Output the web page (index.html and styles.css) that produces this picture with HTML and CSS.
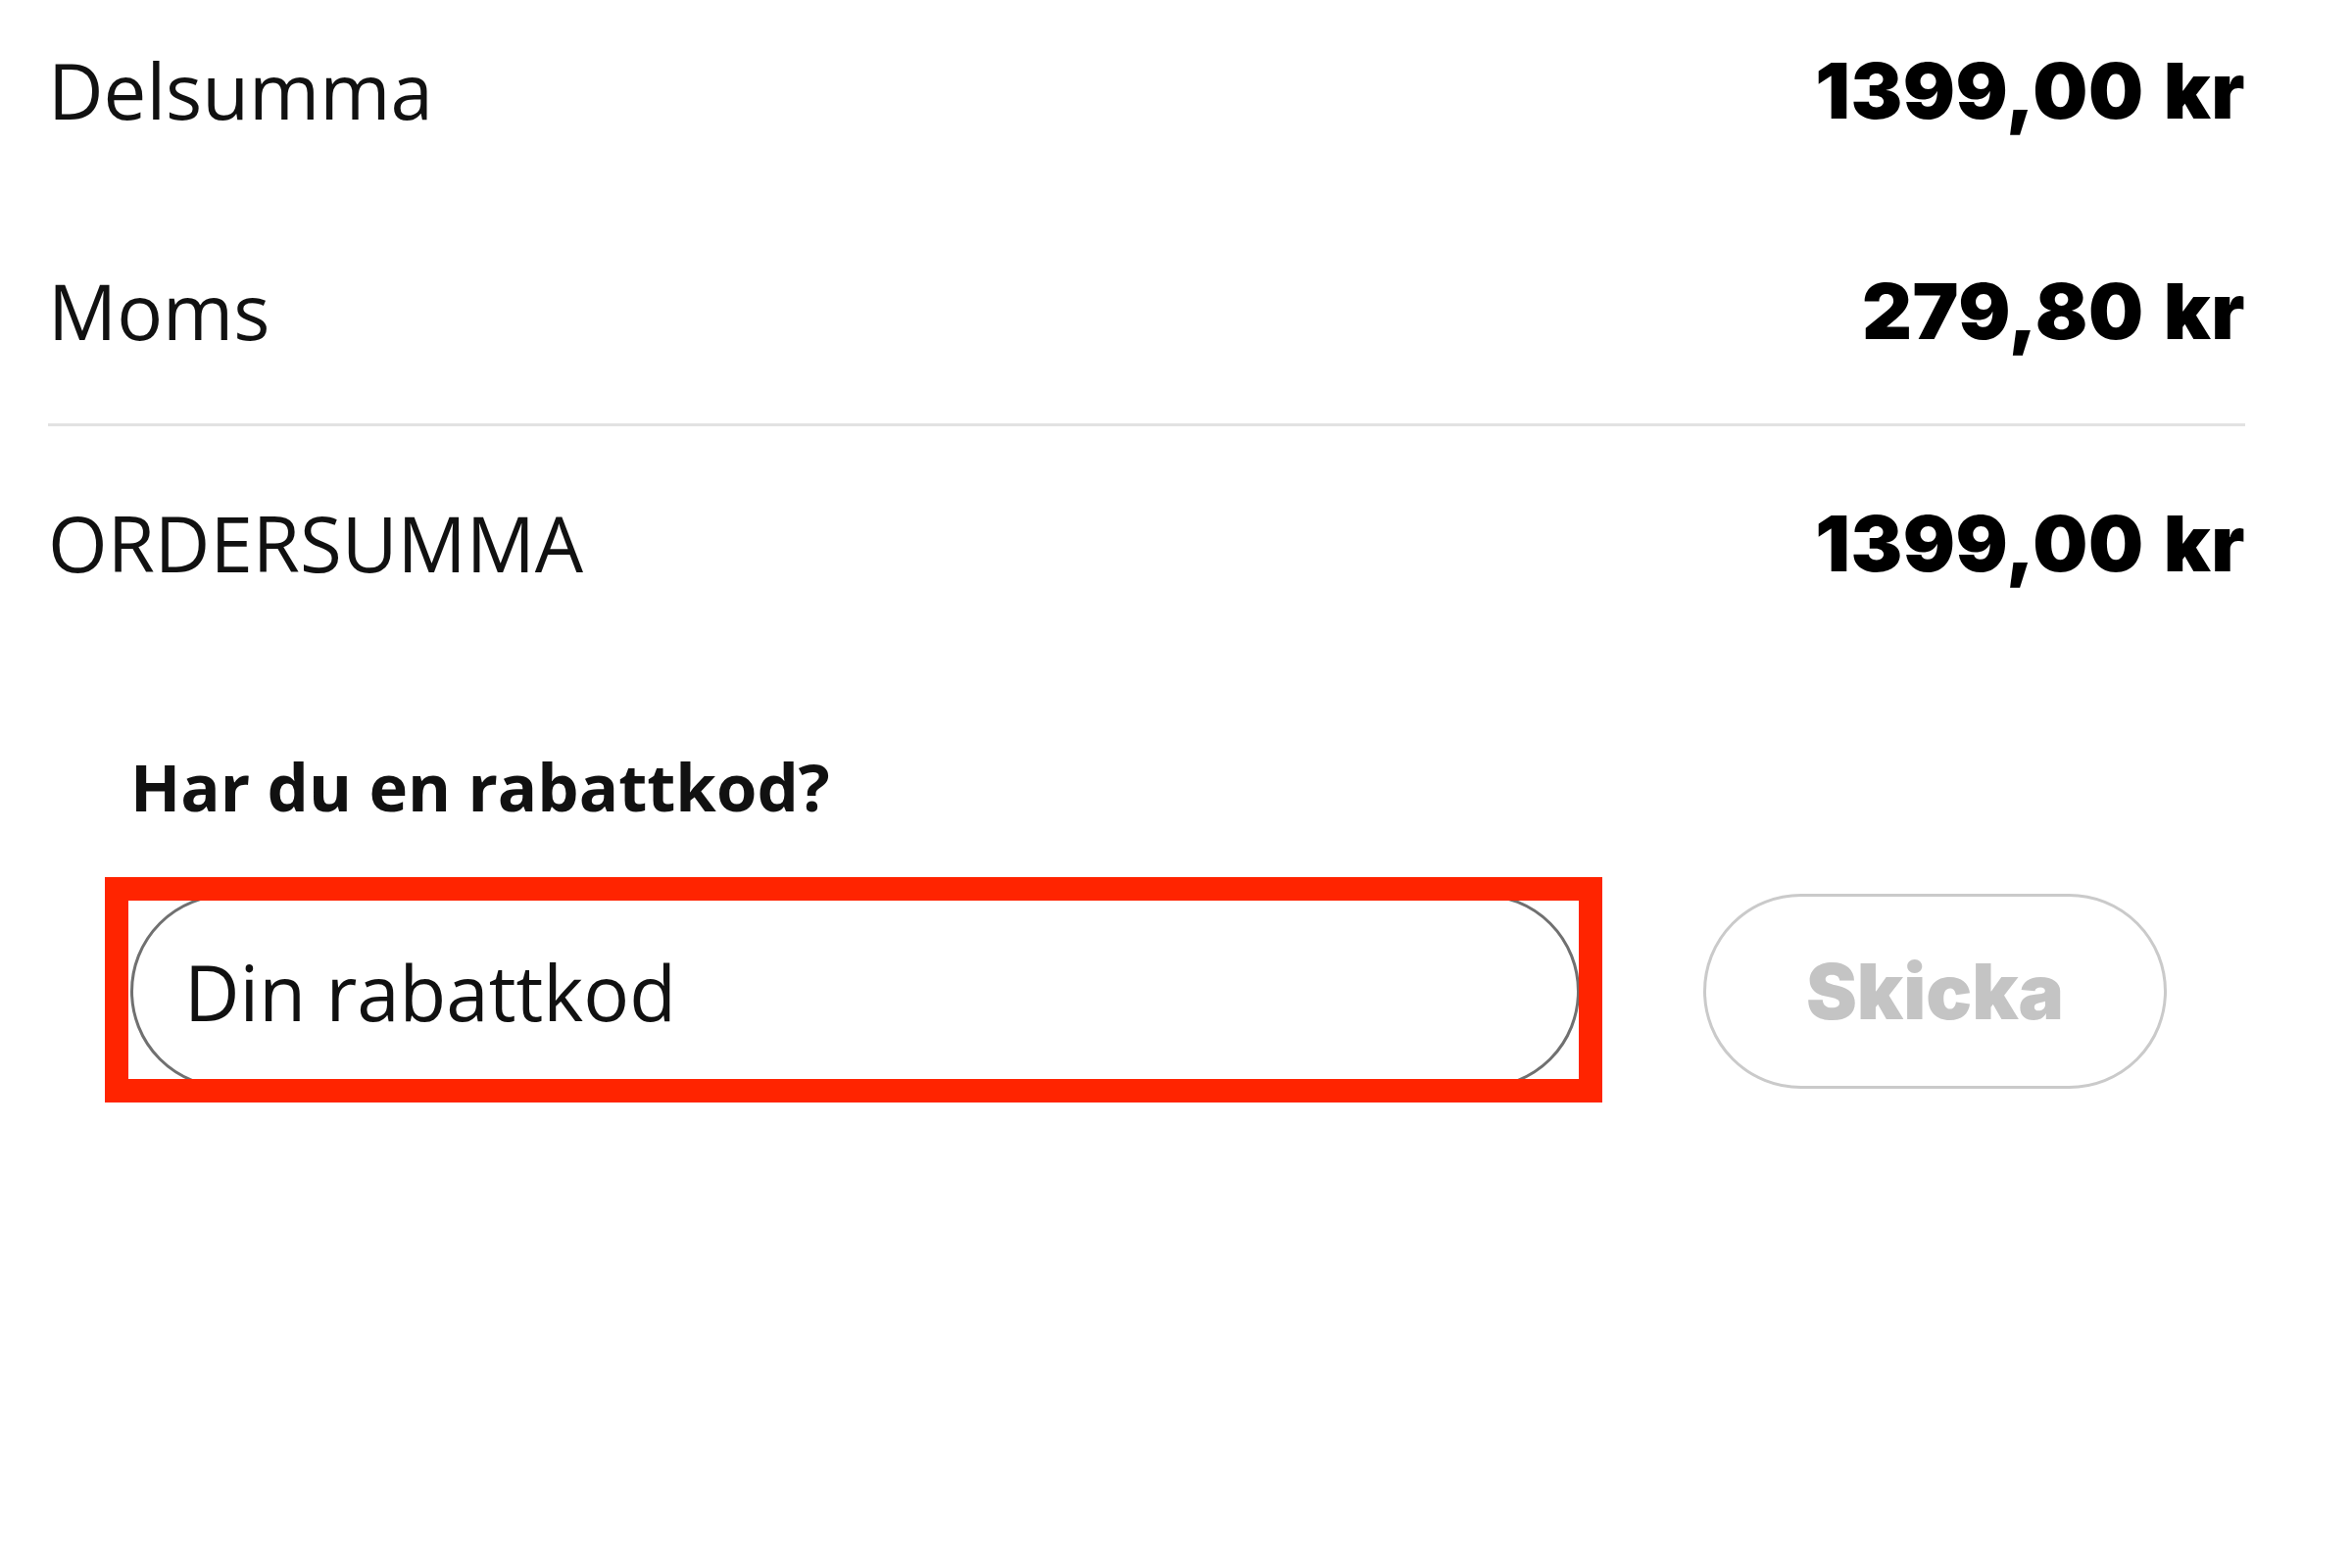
FILE: index.html
```html
<!DOCTYPE html>
<html lang="sv">
<head>
    <meta charset="UTF-8">
    <meta name="viewport" content="width=device-width, initial-scale=1.0">
    <title>Varukorg</title>
    <link rel="stylesheet" href="styles.css">
</head>
<body>
    <main class="summary">
        <div class="row">
            <span class="label">Delsumma</span>
            <span class="amount">1399,00 kr</span>
        </div>
        <div class="row row-moms">
            <span class="label">Moms</span>
            <span class="amount">279,80 kr</span>
        </div>

        <hr class="divider">

        <div class="row row-total">
            <span class="label">ORDERSUMMA</span>
            <span class="amount">1399,00 kr</span>
        </div>

        <!-- Rabattkod -->
        <section class="discount">
            <h2 class="discount-title">Har du en rabattkod?</h2>
            <form class="discount-form">
                <div class="code-field">
                    <input type="text" class="code-input" placeholder="Din rabattkod">
                </div>
                <button type="submit" class="code-button" disabled>Skicka</button>
            </form>
        </section>
    </main>
</body>
</html>
```

FILE: styles.css
```css
body {
    margin: 0;
    background-color: #fff;
    color: #111;
    font-family: "Open Sans", "Noto Sans", sans-serif;
}

.summary {
    width: 2242px;
    margin-left: 49px;
    padding-bottom: 300px;
}

.row {
    display: flex;
    justify-content: space-between;
    align-items: center;
    height: 184px;
}

.row-moms {
    margin-top: 41px;
}

.row-total {
    margin-top: 27px;
}

.label {
    font-size: 78px;
    line-height: 100px;
    font-weight: 400;
    color: #111;
}

.amount {
    font-family: "Inter", "Lato", sans-serif;
    font-size: 79px;
    line-height: 100px;
    font-weight: 900;
    letter-spacing: 0.5px;
    word-spacing: 4px;
    color: #000;
}

.divider {
    margin: 23px 0 0 0;
    border: 0;
    height: 3px;
    background-color: #e2e2e2;
}

.discount {
    margin-top: 116px;
    padding: 0 80px 0 84px;
}

.discount-title {
    margin: 0;
    font-size: 67px;
    line-height: 80px;
    font-weight: 700;
    color: #111;
}

.discount-form {
    display: flex;
    align-items: center;
    gap: 126px;
    margin-top: 70px;
}

.code-field {
    position: relative;
    flex: 1;
}

/* markering runt fältet */
.code-field::after {
    content: "";
    position: absolute;
    top: -17px;
    bottom: -14px;
    left: -26px;
    right: -23px;
    border: 24px solid #ff2400;
    pointer-events: none;
}

.code-input {
    display: block;
    box-sizing: border-box;
    width: 100%;
    height: 199px;
    padding: 0 0 0 52px;
    border: 3px solid #707070;
    border-radius: 100px;
    background: #fff;
    font-family: "Open Sans", "Noto Sans", sans-serif;
    font-size: 78px;
    color: #111;
    outline: none;
}

.code-input::placeholder {
    color: #111;
    opacity: 1;
}

.code-button {
    box-sizing: border-box;
    width: 473px;
    height: 199px;
    border: 3px solid #cacaca;
    border-radius: 100px;
    background: #fff;
    font-family: "Inter", "Lato", sans-serif;
    font-size: 78px;
    font-weight: 900;
    color: #c4c4c4;
}
```
